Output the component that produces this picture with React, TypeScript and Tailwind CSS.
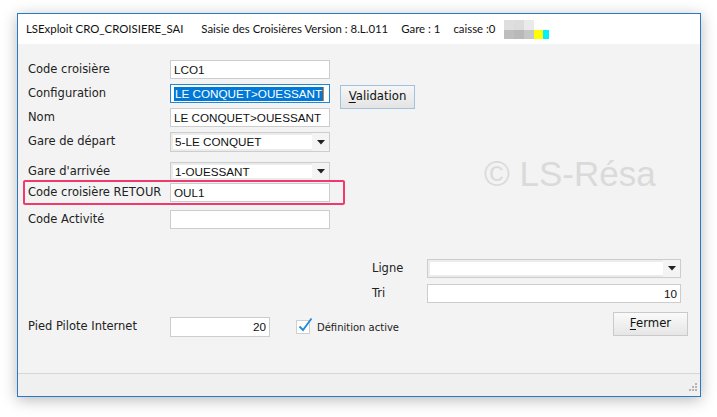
import React from 'react';

const labelFont = { fontFamily: '"DejaVu Sans", Verdana, sans-serif' };

const TextBox = ({ value, width, right, focused }: { value: string; width: string; right?: boolean; focused?: boolean }) => (
  <div
    className={`${width} h-[19px] bg-white border flex items-center px-[3px] text-[11.7px] text-[#111] ${right ? 'justify-end' : ''} ${focused ? 'border-[#1e88d8]' : 'border-[#cdcdcd]'}`}
    style={{ fontFamily: '"Liberation Sans", Arial, sans-serif' }}
  >
    {focused ? (
      <span className="flex items-center h-[14px]">
        <span className="bg-[#0078d7] text-white leading-[14px] px-[1px]">{value}</span>
        <span className="w-[1px] h-[14px] bg-[#f07818]" />
      </span>
    ) : (
      <span className="leading-none">{value}</span>
    )}
  </div>
);

const ComboBox = ({ value, width, height }: { value: string; width: string; height: string }) => (
  <div className={`${width} ${height} bg-[#ececec] border border-[#cdcdcd] flex items-stretch`}>
    <div
      className="flex-1 bg-white m-[2px] mr-0 flex items-center px-[2px] text-[11.7px] text-[#111]"
      style={{ fontFamily: '"Liberation Sans", Arial, sans-serif' }}
    >
      {value}
    </div>
    <div className="w-[17px] flex items-center justify-center bg-[#f4f4f4]">
      <svg width="8" height="5" viewBox="0 0 8 5">
        <path d="M0 0 H8 L4 4.5 Z" fill="#222" />
      </svg>
    </div>
  </div>
);

const Label = ({ children, width = 'w-[142px]' }: { children: React.ReactNode; width?: string }) => (
  <div className={`${width} shrink-0 text-[11.5px] text-[#222]`} style={labelFont}>
    {children}
  </div>
);

export default function App() {
  return (
    <div className="w-[717px] h-[417px] bg-white relative overflow-hidden">
      <div className="absolute left-[17px] top-[13px] w-[684px] h-[384px] border border-[#2b78c5] bg-[#f3f3f3] flex flex-col shadow-[0_3px_14px_rgba(0,0,0,0.28)]">
        {/* title bar */}
        <div
          className="h-[30px] bg-white flex items-center text-[11.4px] text-[#111] shrink-0"
          style={{ fontFamily: 'Lato, "Liberation Sans", sans-serif' }}
        >
          <span className="ml-[8px]">LSExploit CRO_CROISIERE_SAI</span>
          <span className="ml-[18px]">Saisie des Croisières Version : 8.L.011</span>
          <span className="ml-[13px]">Gare : 1</span>
          <span className="ml-[13px]">caisse :0</span>
          <div className="ml-[9px] grid grid-cols-[10px_10px_10px_9px_6px] grid-rows-[10px_9px]">
            <div className="bg-[#dedede]" />
            <div className="bg-[#dcdcdc]" />
            <div className="bg-[#eaeaea]" />
            <div className="bg-white" />
            <div className="bg-white" />
            <div className="bg-[#bebebe]" />
            <div className="bg-[#b9b9b9]" />
            <div className="bg-[#c6c6c6]" />
            <div className="bg-[#ffff00]" />
            <div className="bg-[#00f0ff]" />
          </div>
        </div>

        {/* form */}
        <div className="flex-1 relative flex flex-col pl-[10px] pt-[16px]">
          <div
            className="absolute left-[466px] top-[112px] text-[35px] text-[#dadada] leading-none"
            style={{ fontFamily: '"Liberation Sans", Arial, sans-serif' }}
          >
            © LS-Résa
          </div>

          <div className="flex items-center h-[19px]">
            <Label>Code croisière</Label>
            <TextBox value="LCO1" width="w-[160px]" />
          </div>
          <div className="flex items-start h-[19px] mt-[5px]">
            <Label><div className="h-[19px] flex items-center">Configuration</div></Label>
            <TextBox value="LE CONQUET>OUESSANT" width="w-[160px]" focused />
            <button
              className="ml-[10px] mt-[1px] w-[75px] h-[24px] border border-[#9fc3de] bg-gradient-to-b from-[#f6f6f6] to-[#e4e4e4] text-[11.7px] text-[#111]"
              style={labelFont}
            >
              <span className="underline underline-offset-2">V</span>alidation
            </button>
          </div>
          <div className="flex items-center h-[19px] mt-[5px]">
            <Label>Nom</Label>
            <TextBox value="LE CONQUET>OUESSANT" width="w-[160px]" />
          </div>
          <div className="flex items-center h-[20px] mt-[5px]">
            <Label>Gare de départ</Label>
            <ComboBox value="5-LE CONQUET" width="w-[160px]" height="h-[20px]" />
          </div>
          <div className="flex items-center h-[19px] mt-[10px]">
            <Label>Gare d'arrivée</Label>
            <ComboBox value="1-OUESSANT" width="w-[160px]" height="h-[19px]" />
          </div>
          <div className="relative flex items-center h-[19px] mt-[2px]">
            <div className="absolute left-[-5px] top-[-3px] w-[322px] h-[25px] border-2 border-[#f03a6e] rounded-[2px]" />
            <Label>Code croisière RETOUR</Label>
            <TextBox value="OUL1" width="w-[160px]" />
          </div>
          <div className="flex items-center h-[19px] mt-[8px]">
            <Label>Code Activité</Label>
            <TextBox value="" width="w-[160px]" />
          </div>

          <div className="flex items-center h-[19px] mt-[30px] pl-[344px]">
            <Label width="w-[55px]">Ligne</Label>
            <ComboBox value="" width="w-[254px]" height="h-[19px]" />
          </div>
          <div className="flex items-center h-[19px] mt-[6px] pl-[344px]">
            <Label width="w-[55px]">Tri</Label>
            <TextBox value="10" width="w-[254px]" right />
          </div>

          <div className="flex items-start mt-[9px] pr-[12px]">
            <div className="flex items-center h-[20px] mt-[5px]">
              <Label>Pied Pilote Internet</Label>
              <div className="h-[20px] flex">
                <TextBox value="20" width="w-[100px] !h-[20px]" right />
              </div>
              <div className="ml-[26px] relative w-[14px] h-[14px] border border-[#cfcfcf] bg-white">
                <svg className="absolute left-[1px] top-[-4px]" width="15" height="16" viewBox="0 0 15 16">
                  <path d="M1.5 9.5 L5 13 L13.5 1.5" stroke="#1e8ae0" strokeWidth="1.8" fill="none" />
                </svg>
              </div>
              <span className="ml-[7px] text-[10px] text-[#222]" style={labelFont}>Définition active</span>
            </div>
            <button
              className="ml-auto w-[75px] h-[24px] border border-[#cacaca] bg-gradient-to-b from-[#fafafa] to-[#e6e6e6] text-[11.7px] text-[#111]"
              style={labelFont}
            >
              <span className="underline underline-offset-2">F</span>ermer
            </button>
          </div>
        </div>

        {/* status bar */}
        <div className="h-[23px] shrink-0 border-t border-[#d6d6d6] bg-[#f0f0f0] flex justify-end items-end">
          <svg className="mr-[2px] mb-[2px]" width="12" height="12" viewBox="0 0 12 12">
            <rect x="9" y="1" width="2" height="2" fill="#b4b4b4" />
            <rect x="6" y="4" width="2" height="2" fill="#b4b4b4" />
            <rect x="9" y="4" width="2" height="2" fill="#b4b4b4" />
            <rect x="3" y="7" width="2" height="2" fill="#b4b4b4" />
            <rect x="6" y="7" width="2" height="2" fill="#b4b4b4" />
            <rect x="9" y="7" width="2" height="2" fill="#b4b4b4" />
          </svg>
        </div>
      </div>
    </div>
  );
}
